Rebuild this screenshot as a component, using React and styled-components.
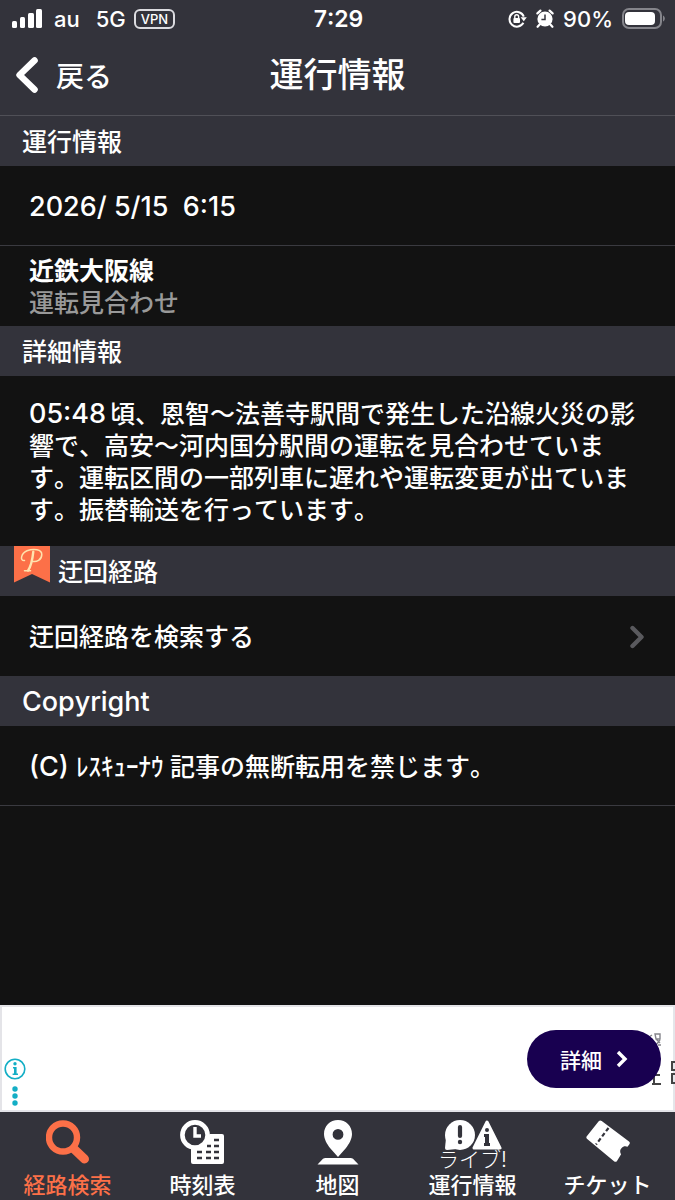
import React from 'react';
import styled, { createGlobalStyle } from 'styled-components';

const App = () => (
  <>
    <GlobalStyle />
    <Screen>
      <StatusBar>
        <StatusGroup>
          <SignalIcon />
          <Carrier>au</Carrier>
          <Network>5G</Network>
          <VpnBadge>VPN</VpnBadge>
        </StatusGroup>
        <Clock>7:29</Clock>
        <StatusGroup $end>
          <LockIcon />
          <AlarmIcon />
          <BatteryText>90%</BatteryText>
          <BatteryIcon />
        </StatusGroup>
      </StatusBar>

      <NavBar>
        <BackButton type="button">
          <BackIcon />
          戻る
        </BackButton>
        <PageTitle>運行情報</PageTitle>
      </NavBar>

      <Main>
        <SectionTitle>運行情報</SectionTitle>
        <Row $line>
          <Latin>2026/ 5/15&nbsp; 6:15</Latin>
        </Row>
        <Row>
          <div>
            <LineName>近鉄大阪線</LineName>
            <LineStatus>運転見合わせ</LineStatus>
          </div>
        </Row>

        <SectionTitle>詳細情報</SectionTitle>
        <Detail>
          <DetailTime>05:48</DetailTime>
          頃、恩智〜法善寺駅間で発生した沿線火災の影響で、高安〜河内国分駅間の運転を見合わせています。運転区間の一部列車に遅れや運転変更が出ています。振替輸送を行っています。
        </Detail>

        <SectionTitle $ribbon>
          <RibbonIcon />
          迂回経路
        </SectionTitle>
        <RowLink href="#detour">
          迂回経路を検索する
          <ForwardIcon />
        </RowLink>

        <SectionTitle>
          <Latin>Copyright</Latin>
        </SectionTitle>
        <Row $line>
          <span>
            <Latin>(C) </Latin>
            ﾚｽｷｭｰﾅｳ 記事の無断転用を禁じます。
          </span>
        </Row>
      </Main>

      <Banner>
        <BannerInfo>
          <InfoIcon />
          <DotsIcon />
        </BannerInfo>
        <BannerArt />
        <BannerButton type="button">
          詳細
          <BannerArrow />
        </BannerButton>
      </Banner>

      <TabBar>
        <Tab href="#route" $active>
          <SearchIcon />
          経路検索
        </Tab>
        <Tab href="#timetable">
          <TimetableIcon />
          時刻表
        </Tab>
        <Tab href="#map">
          <MapIcon />
          地図
        </Tab>
        <Tab href="#live">
          <LiveIcon />
          <LiveLabel>ライブ!</LiveLabel>
          運行情報
        </Tab>
        <Tab href="#ticket">
          <TicketIcon />
          チケット
        </Tab>
      </TabBar>
    </Screen>
  </>
);

const SignalIcon = () => (
  <svg width="30" height="20" viewBox="0 0 30 20" fill="#fff" aria-hidden="true">
    <rect x="0" y="12" width="5" height="7" rx="1.5" />
    <rect x="8" y="8" width="5" height="11" rx="1.5" />
    <rect x="16" y="4" width="6" height="15" rx="1.5" />
    <rect x="24" y="0" width="6" height="19" rx="1.5" />
  </svg>
);

const LockIcon = () => (
  <svg width="19" height="18" viewBox="0 0 19 18" fill="none" stroke="#fff" strokeWidth="2" aria-hidden="true">
    <path d="M15.4 12.8A7.4 7.4 0 1 1 15.8 6.6" />
    <path d="M12.6 7.2h6.2l-3 4z" fill="#fff" stroke="none" />
    <rect x="5.4" y="8" width="6.6" height="5" rx="1" fill="#fff" stroke="none" />
    <path d="M6.8 8.4V6.6a1.9 1.9 0 0 1 3.8 0v1.8" strokeWidth="1.4" />
  </svg>
);

const AlarmIcon = () => (
  <svg width="18" height="19" viewBox="0 0 18 19" aria-hidden="true">
    <circle cx="9" cy="10" r="7.6" fill="#fff" />
    <path d="M1.4 4.4 4.4 1.6M16.6 4.4l-3-2.8M3.6 15.6l-2 2.2M14.4 15.6l2 2.2" stroke="#fff" strokeWidth="2.2" strokeLinecap="round" />
    <path d="M9 5.4v5H5.4" fill="none" stroke="#33333b" strokeWidth="1.5" />
  </svg>
);

const BatteryIcon = () => (
  <svg width="43" height="22" viewBox="0 0 43 22" aria-hidden="true">
    <rect x="1" y="1" width="38" height="19" rx="6" fill="none" stroke="#85858b" strokeWidth="2" />
    <rect x="3" y="4" width="30" height="13" rx="4" fill="#fff" />
    <path d="M41 7.5c2.4.8 2.4 5.2 0 6z" fill="#85858b" />
  </svg>
);

const BackIcon = () => (
  <svg width="22" height="36" viewBox="0 0 22 36" fill="none" aria-hidden="true">
    <path d="M18.6 3.4 3.5 18l15.1 14.6" stroke="#fff" strokeWidth="6.4" strokeLinecap="round" strokeLinejoin="round" />
  </svg>
);

const ForwardIcon = () => (
  <svg width="16" height="24" viewBox="0 0 16 24" fill="none" aria-hidden="true">
    <path d="m3.5 3 9 9-9 9" stroke="#59595d" strokeWidth="4.4" strokeLinecap="round" strokeLinejoin="round" />
  </svg>
);

const RibbonIcon = () => (
  <svg width="36" height="37" viewBox="0 0 36 37" aria-hidden="true">
    <path d="M0 0h36v36.5L18 28 0 36.5z" fill="#fc7048" />
    <g fill="none" stroke="#ffe3ae" strokeLinecap="round">
      <path
        d="M10.5 14.6C5.5 15 7 7.5 13 4.8c6.5-2.6 15-1.6 14.8 3.8-.2 5.2-5.3 8-9.6 6.6M10.5 24.8h6"
        strokeWidth="1.5"
      />
      <path d="M19.3 5.6c-.7 7-2.3 14.6-5.3 19" strokeWidth="2.4" />
    </g>
  </svg>
);

const InfoIcon = () => (
  <svg width="22" height="22" viewBox="0 0 22 22" aria-hidden="true">
    <circle cx="11" cy="11" r="9.8" fill="none" stroke="#13aec5" strokeWidth="1.6" />
    <circle cx="11" cy="5.7" r="1.7" fill="#13aec5" />
    <path d="M9 9h3.6v6.4H14V17H8.6v-1.6H10v-4.8H9z" fill="#13aec5" />
  </svg>
);

const DotsIcon = () => (
  <svg width="6" height="20" viewBox="0 0 6 20" fill="#13aec5" aria-hidden="true">
    <circle cx="3" cy="3" r="2.7" />
    <circle cx="3" cy="10" r="2.7" />
    <circle cx="3" cy="17" r="2.7" />
  </svg>
);

const BannerArrow = () => (
  <svg width="12" height="18" viewBox="0 0 12 18" fill="none" aria-hidden="true">
    <path d="M2 2l7 7-7 7" stroke="#fff" strokeWidth="3.4" />
  </svg>
);

const BannerArt = () => (
  <ArtSvg width="27" height="103" viewBox="0 0 27 103" aria-hidden="true">
    <path d="M25 0h2v103h-2z" fill="#e4e6ea" />
    <path d="M1 30l3-2M7 27h5v5H8zM8 32l4 4M12 33l-4 5M10 38h3" fill="none" stroke="#85858b" strokeWidth="1.4" />
    <path d="M4 77h9M6 68h6M6 68v9" fill="none" stroke="#444" strokeWidth="2" />
    <path d="M27 55h-3v8h3M27 67h-3v9h3" fill="none" stroke="#444" strokeWidth="2" />
  </ArtSvg>
);

const SearchIcon = () => (
  <svg width="44" height="44" viewBox="0 0 44 44" fill="none" stroke="#fc7048" aria-hidden="true">
    <circle cx="17" cy="17.5" r="14" strokeWidth="6.4" />
    <path d="M28 29l10.5 10" strokeWidth="9" strokeLinecap="round" />
  </svg>
);

const TimetableIcon = () => (
  <svg width="46" height="46" viewBox="0 0 46 46" aria-hidden="true">
    <path d="M30 14h12a2 2 0 0 1 2 2v26a2 2 0 0 1-2 2H13a2 2 0 0 1-2-2V28z" fill="#fff" />
    <path
      d="M34 20h5M27 26h4M34 26h5M17 32h5M26 32h5M34 32h5M17 38h5M26 38h5M34 38h5"
      stroke="#33333b"
      strokeWidth="2.6"
    />
    <circle cx="15" cy="15" r="12.6" fill="#33333b" stroke="#fff" strokeWidth="4.6" />
    <path d="M15 7v9h6" fill="none" stroke="#fff" strokeWidth="3.4" />
  </svg>
);

const MapIcon = () => (
  <svg width="42" height="46" viewBox="0 0 42 46" fill="#fff" aria-hidden="true">
    <path
      fillRule="evenodd"
      d="M21 0C13 0 7 6 7 14c0 5 3 10 6 14l8 9 8-9c3-4 6-9 6-14 0-8-6-14-14-14zm0 9a5.4 5.4 0 1 1 0 10.8A5.4 5.4 0 0 1 21 9z"
    />
    <path d="M8.5 38h25q1.5 0 2.5.8l5.5 5.7H.5L6 38.8q1-.8 2.5-.8z" />
  </svg>
);

const LiveIcon = () => (
  <svg width="58" height="32" viewBox="0 0 58 32" aria-hidden="true">
    <circle cx="16" cy="15" r="15" fill="#fff" />
    <path d="M2 18 1 28q0 2 2 2l10-1z" fill="#fff" />
    <path d="M16 7v9" stroke="#33333b" strokeWidth="4.2" strokeLinecap="round" />
    <circle cx="16" cy="22" r="2.2" fill="#33333b" />
    <path d="m43 2 13 26H30z" fill="#fff" stroke="#fff" strokeWidth="3" strokeLinejoin="round" />
    <path d="M40 14h5v9h1v3h-6v-3h1v-6h-1z" fill="#33333b" />
    <circle cx="43" cy="10" r="2" fill="#33333b" />
  </svg>
);

const TicketIcon = () => (
  <svg width="44" height="44" viewBox="0 0 44 44" aria-hidden="true">
    <path
      d="M12.7 1.3q1.3-1.6 3-.4L43 21.500q1.500 1.200.4 2.700l-1.900 2.500c-4.800-2.300-9.300 3.600-6.400 7.500L31 41q-1.200 1.500-2.700.4L1.200 19q-1.500-1.200-.4-2.700z"
      fill="#fff"
    />
    <path d="M22.5 8 10 24.5" stroke="#33333b" strokeWidth="2.2" strokeDasharray="4 2.5" />
  </svg>
);

const GlobalStyle = createGlobalStyle`
  * {
    box-sizing: border-box;
  }

  body {
    margin: 0;
    background: #121212;
    color: #fff;
    font-family: Inter, 'Noto Sans CJK JP', sans-serif;
    font-size: 25px;
    font-weight: 500;
    font-kerning: none;
    text-spacing-trim: space-all;
  }

  svg {
    display: block;
    flex: none;
  }

  a {
    color: inherit;
    text-decoration: none;
  }

  button {
    border: 0;
    padding: 0;
    color: inherit;
    font: inherit;
    cursor: pointer;
  }
`;

const Screen = styled.div`
  display: flex;
  flex-direction: column;
  min-height: 100vh;
`;

const StatusBar = styled.div`
  display: grid;
  grid-template-columns: 1fr auto 1fr;
  align-items: center;
  height: 37px;
  padding: 0 10px 0 12px;
  background: #33333b;
  font-size: 22px;
`;

const StatusGroup = styled.div`
  display: flex;
  align-items: center;
  gap: ${(props) => (props.$end ? '9px' : '0')};
  justify-content: ${(props) => (props.$end ? 'flex-end' : 'flex-start')};
`;

const Carrier = styled.span`
  margin-left: 12px;
`;

const Network = styled.span`
  margin: 0 8px 0 16px;
`;

const VpnBadge = styled.span`
  padding: 0 5px;
  border: 2px solid #dcdce0;
  border-radius: 6px;
  font-size: 13px;
  line-height: 16px;
`;

const Clock = styled.time`
  font-size: 23px;
  font-weight: 600;
`;

const BatteryText = styled.span`
  font-size: 22px;
`;

const NavBar = styled.header`
  display: grid;
  grid-template-columns: 1fr auto 1fr;
  align-items: center;
  height: 79px;
  padding: 0 16px 2px;
  border-bottom: 1px solid #505057;
  background: #33333b;
`;

const BackButton = styled.button`
  display: flex;
  align-items: center;
  justify-self: start;
  gap: 18px;
  background: none;

  && {
    font-size: 28px;
  }
`;

const PageTitle = styled.h1`
  margin: 0;
  font-size: 34px;
  font-weight: 500;
  line-height: 40px;
`;

const Main = styled.main`
  flex: 1;
`;

const SectionTitle = styled.h2`
  display: flex;
  align-items: flex-start;
  gap: 8px;
  height: 50px;
  margin: 0;
  padding: 0 ${(props) => (props.$ribbon ? '14px' : '22px')};
  background: #33333b;
  font-size: 25px;
  font-weight: 500;
  line-height: 52px;
`;

const Row = styled.div`
  display: flex;
  align-items: center;
  justify-content: space-between;
  min-height: 80px;
  padding: 2px 30px 0 29px;
  border-bottom: ${(props) => (props.$line ? '1px solid #3a3a40' : '0')};
  line-height: 32px;
`;

const RowLink = styled(Row).attrs({ as: 'a' })``;

const Latin = styled.span`
  font-size: 27px;
`;

const DetailTime = styled(Latin)`
  margin-right: 4px;
`;

const LineName = styled.div`
  font-weight: 700;
`;

const LineStatus = styled.div`
  color: #999;
`;

const Detail = styled.p`
  margin: 0;
  padding: 22px 29px 20px;
  line-height: 32px;
`;

const Banner = styled.aside`
  position: relative;
  display: flex;
  align-items: center;
  justify-content: space-between;
  height: 107px;
  padding: 0 14px 0 2px;
  border: 2px solid #e4e4e8;
  border-right: 0;
  background: #fff;
`;

const BannerInfo = styled.div`
  display: flex;
  flex-direction: column;
  align-items: center;
  align-self: flex-end;
  gap: 6px;
  padding-bottom: 4px;
`;

const ArtSvg = styled.svg`
  position: absolute;
  top: 0;
  right: 0;
`;

const BannerButton = styled.button`
  position: relative;
  display: flex;
  align-items: center;
  justify-content: center;
  gap: 14px;
  width: 134px;
  height: 58px;
  border-radius: 29px;
  background: #180050;

  && {
    font-size: 21px;
  }
`;

const TabBar = styled.nav`
  display: grid;
  grid-template-columns: repeat(5, 1fr);
  height: 88px;
  background: #33333b;
`;

const Tab = styled.a`
  position: relative;
  display: flex;
  flex-direction: column;
  align-items: center;
  justify-content: space-between;
  padding: 8px 0 1px;
  font-size: 22px;
  line-height: 28px;

  && {
    color: ${(props) => (props.$active ? '#fc7048' : '#fff')};
  }
`;

const LiveLabel = styled.span`
  position: absolute;
  top: 36px;
  font-size: 21px;
  font-weight: 300;
  line-height: 24px;
`;

export default App;
